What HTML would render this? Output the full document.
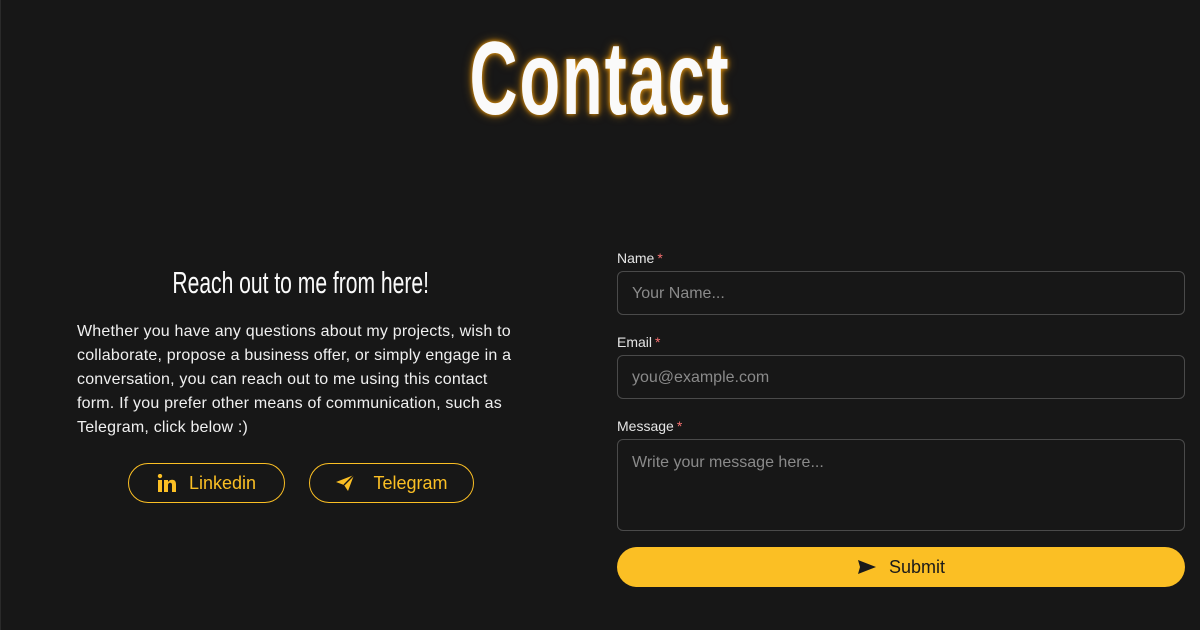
<!DOCTYPE html>
<html><head><style>
*{box-sizing:border-box;margin:0;padding:0}
body{width:1200px;height:630px;background:#171717;font-family:"Liberation Sans",sans-serif;color:#f5f5f5;position:relative;overflow:hidden;box-shadow:inset 1px 0 0 #2a2a2a}
.title{position:absolute;left:0;width:1200px;top:19px;text-align:center;font-size:104px;line-height:120px;font-weight:bold;color:#fafafa;text-shadow:0 0 6px #f59e0b,0 0 12px rgba(245,158,11,.6)}
.title span{display:inline-block;transform:scaleX(.64);letter-spacing:3px}
.sub{position:absolute;left:77px;width:448px;top:263px;text-align:center;font-size:31px;line-height:40px;color:#fafafa}
.sub span{display:inline-block;transform:scaleX(.68)}
.para{position:absolute;left:77px;top:320px;width:448px;font-size:16px;line-height:24px;color:#f0f0f0;letter-spacing:.2px}
.btn{position:absolute;top:463px;height:40px;border:1px solid #fbbf24;border-radius:20px;color:#fbbf24;font-size:18px;display:flex;align-items:center;justify-content:center;gap:12px}
label{position:absolute;left:617px;font-size:14px;color:#e5e5e5}
label b{color:#f87171;font-weight:normal;margin-left:3px}
.in{position:absolute;left:617px;width:568px;border:1px solid #4a4a4a;border-radius:6px;color:#8a8a8a;font-size:16px;padding:0 14px;display:flex;align-items:center}
.submit{position:absolute;left:617px;top:547px;width:568px;height:40px;border-radius:20px;background:#fbbf24;color:#1a1a1a;font-size:18px;display:flex;align-items:center;justify-content:center;gap:12px}
</style></head><body>
<div class="title"><span>Contact</span></div>
<div class="sub"><span>Reach out to me from here!</span></div>
<div class="para">Whether you have any questions about my projects, wish to collaborate, propose a business offer, or simply engage in a conversation, you can reach out to me using this contact form. If you prefer other means of communication, such as Telegram, click below :)</div>
<div class="btn" style="left:128px;width:157px"><svg width="20" height="18" viewBox="0 0 20 18"><rect x="1" y="6" width="4" height="12" fill="#fbbf24"/><circle cx="3" cy="2" r="2.2" fill="#fbbf24"/><path d="M7 6h4v2c1-1.6 2.5-2.3 4.2-2.3C18 5.7 19 7.5 19 10.5V18h-4v-7c0-1.5-.6-2.3-1.8-2.3S11 9.6 11 11v7H7z" fill="#fbbf24"/></svg>Linkedin</div>
<div class="btn" style="left:309px;width:165px;gap:18px"><svg width="20" height="18" viewBox="0 0 20 18"><path d="M1 8L19 1 13 17 9 11z" fill="#fbbf24"/><path d="M9 11L19 1" stroke="#171717" stroke-width="1.4"/></svg>Telegram</div>
<label style="top:250px">Name<b>*</b></label>
<div class="in" style="top:271px;height:44px;padding-top:2px">Your Name...</div>
<label style="top:334px">Email<b>*</b></label>
<div class="in" style="top:355px;height:44px;padding-top:2px">you@example.com</div>
<label style="top:418px">Message<b>*</b></label>
<div class="in" style="top:439px;height:92px;align-items:flex-start;padding-top:14px">Write your message here...</div>
<div class="submit"><svg width="20" height="16" viewBox="0 0 20 16"><path d="M1 1L19 8 1 15 3 8z" fill="#1a1a1a"/></svg>Submit</div>
</body></html>
